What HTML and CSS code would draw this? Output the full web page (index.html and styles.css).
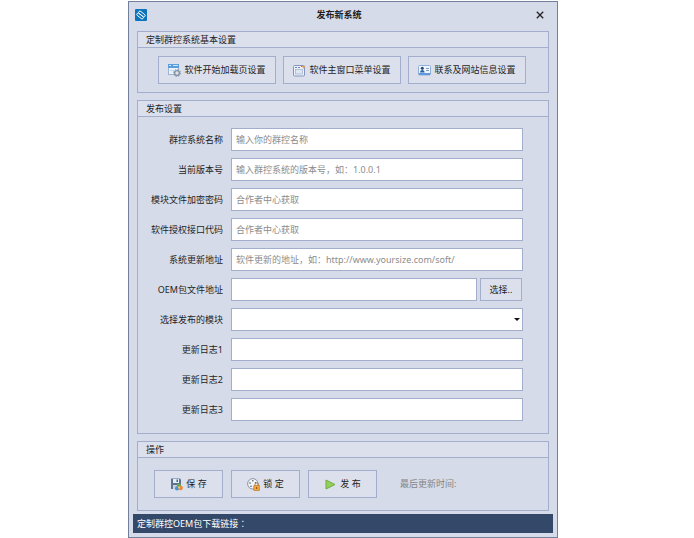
FILE: index.html
```html
<!DOCTYPE html>
<html>
<head>
<meta charset="utf-8">
<title>发布新系统</title>
<link rel="stylesheet" href="styles.css">
</head>
<body>
<main class="window">
  <header class="titlebar">
    <svg class="logo" viewBox="0 0 12 12" aria-hidden="true">
      <rect width="12" height="12" rx="1" fill="#0b74bd"/>
      <g fill="none" stroke="#fff" stroke-width="1" stroke-linejoin="round" stroke-linecap="round">
        <path d="M8 7.6 4 4.4a1.3 1.3 0 0 1 1.8-1.9L9.8 5.7a1.3 1.3 0 0 1-1 2.2"/>
        <path d="M4 4.4 8 7.6a1.3 1.3 0 0 1-1.8 1.9L2.2 6.3a1.3 1.3 0 0 1 1-2.2"/>
      </g>
    </svg>
    <h1 class="title">发布新系统</h1>
    <button class="close" type="button" aria-label="关闭">
      <svg viewBox="0 0 8 8"><path d="M.8.8 7.2 7.2M7.2.8.8 7.2" fill="none" stroke="#222" stroke-width="1.3"/></svg>
    </button>
  </header>

  <section class="group">
    <h2 class="group-head">定制群控系统基本设置</h2>
    <div class="presets">
      <button class="btn" type="button">
        <svg class="icon" viewBox="0 0 13 13">
          <rect x=".5" y=".5" width="10" height="10" fill="#e9f1fb" stroke="#9db4d4"/>
          <path d="M0 0h11v4H0z" fill="#5b9ddb"/>
          <path d="M1 1.5h2M5 1.5h5" stroke="#cfe6fa"/>
          <path d="M2 6.5h4" stroke="#c5d5e8"/>
          <circle cx="9" cy="9" r="2.4" fill="#dfe3ea" stroke="#8592a6" stroke-width="1.4"/>
          <circle cx="9" cy="9" r="3.5" fill="none" stroke="#8592a6" stroke-dasharray="1.4 1.35"/>
        </svg>
        软件开始加载页设置
      </button>
      <button class="btn" type="button">
        <svg class="icon" viewBox="0 0 13 13">
          <rect x=".5" y="1.5" width="11" height="10.5" rx="1" fill="#eef2fb" stroke="#8495bd"/>
          <path d="M2 3.5h2M5 3.5h2" stroke="#6c80ac"/>
          <rect x="2.5" y="5.5" width="7" height="4.5" fill="#dfe6f4" stroke="#a9b6d2" stroke-width=".8"/>
          <path d="M8 2.5h1.5" stroke="#4976bd"/>
          <path d="M10.5 1v3.4M8.8 2.7h3.4" stroke="#ee9a50" stroke-width="1.2"/>
        </svg>
        软件主窗口菜单设置
      </button>
      <button class="btn" type="button">
        <svg class="icon" viewBox="0 0 13 13">
          <rect x=".5" y="1.5" width="12" height="9.5" rx="1" fill="#eef5fd" stroke="#8fafd9"/>
          <path d="M1 9h11v2H1z" fill="#5f9ade"/>
          <circle cx="4.3" cy="4.3" r="1.5" fill="#27476f"/>
          <path d="M2 8.5c0-3.4 4.6-3.4 4.6 0z" fill="#285e9f"/>
          <path d="M8 4.5h3M8 6.5h3" stroke="#7f9cc4"/>
        </svg>
        联系及网站信息设置
      </button>
    </div>
  </section>

  <section class="group">
    <h2 class="group-head">发布设置</h2>
    <form class="form">
      <div class="row"><label for="name">群控系统名称</label><input id="name" type="text" placeholder="输入你的群控名称"></div>
      <div class="row"><label for="version">当前版本号</label><input id="version" type="text" placeholder="输入群控系统的版本号，如：1.0.0.1"></div>
      <div class="row"><label for="password">模块文件加密密码</label><input id="password" type="text" placeholder="合作者中心获取"></div>
      <div class="row"><label for="code">软件授权接口代码</label><input id="code" type="text" placeholder="合作者中心获取"></div>
      <div class="row"><label for="url">系统更新地址</label><input id="url" type="text" placeholder="软件更新的地址，如：http://www.yoursize.com/soft/"></div>
      <div class="row"><label for="oem">OEM包文件地址</label><input id="oem" type="text"><button class="btn browse" type="button">选择..</button></div>
      <div class="row">
        <label for="module">选择发布的模块</label>
        <div class="combo">
          <select id="module"></select>
          <svg class="arrow" viewBox="0 0 6 3"><path d="M0 0h6L3 3z" fill="#111"/></svg>
        </div>
      </div>
      <div class="row"><label for="log1">更新日志1</label><input id="log1" type="text"></div>
      <div class="row"><label for="log2">更新日志2</label><input id="log2" type="text"></div>
      <div class="row"><label for="log3">更新日志3</label><input id="log3" type="text"></div>
    </form>
  </section>

  <section class="group">
    <h2 class="group-head">操作</h2>
    <div class="actions">
      <button class="btn" type="button">
        <svg class="icon" viewBox="0 0 13 13">
          <path d="M1 .5h9l1 1V11H1z" fill="#5c7390"/>
          <path d="M3 1h6v4H3z" fill="#e4ecf5"/>
          <path d="M6.5 1.5h1.5v2.5H6.5z" fill="#4c6583"/>
          <path d="M3 7h5v4H3z" fill="#c6d3e2"/>
          <circle cx="9" cy="7.6" r="2.1" fill="#69a84d"/>
          <circle cx="7" cy="10.4" r="2.1" fill="#4b91d1"/>
          <circle cx="10.7" cy="10" r="2.2" fill="#ee8838"/>
          <circle cx="9" cy="9.4" r="1" fill="#f6d466"/>
        </svg>
        保 存
      </button>
      <button class="btn" type="button">
        <svg class="icon" viewBox="0 0 13 13">
          <circle cx="5.8" cy="5.8" r="5.2" fill="#f2f4f8" stroke="#8a929e"/>
          <g fill="#4f5a68"><circle cx="5.8" cy="2.8" r=".8"/><circle cx="3" cy="5" r=".8"/><circle cx="8.6" cy="4.7" r=".8"/><circle cx="4" cy="8.2" r=".8"/></g>
          <path d="M7.8 8V6.8a1.9 1.9 0 0 1 3.8 0V8" fill="none" stroke="#9a8060"/>
          <rect x="6.7" y="7.5" width="6" height="5" rx=".6" fill="#f0a53d" stroke="#c07a30" stroke-width=".7"/>
          <path d="M9.7 9v2" stroke="#8a4c15"/>
        </svg>
        锁 定
      </button>
      <button class="btn" type="button">
        <svg class="icon" viewBox="0 0 13 13">
          <path d="M2 2v9L11 6.5z" fill="#94cf59" stroke="#6fac41" stroke-linejoin="round"/>
        </svg>
        发 布
      </button>
      <span class="updated">最后更新时间:</span>
    </div>
  </section>

  <footer class="status">定制群控OEM包下载链接：</footer>
</main>
</body>
</html>
```
FILE: styles.css
```css
* { box-sizing: border-box; }

body {
  margin: 0;
  padding: 1px 136px 0 128px;
  background: #fff;
  color: #1e1e1e;
  font: 9px/14px "Noto Sans", "Noto Sans CJK SC", sans-serif;
}

button, input, select { font: inherit; color: inherit; }

.window {
  display: flex;
  flex-direction: column;
  padding: 0 8px 4px;
  border: 1px solid #72809c;
  background: #d6dbe9;
}

.titlebar {
  display: grid;
  grid-template-columns: 16px 1fr 26px;
  align-items: center;
  height: 29px;
  margin: 0 -4px 0 -2px;
  padding-bottom: 4px;
}

.logo { width: 12px; height: 12px; }

.title {
  margin: 0;
  font-size: 9px;
  font-weight: 700;
  text-align: center;
}

.close {
  display: flex;
  justify-content: center;
  padding: 0;
  border: 0;
  background: none;
}

.close svg { width: 8px; height: 8px; }

.group {
  margin-bottom: 7px;
  border: 1px solid #a3aecd;
}

.group-head {
  margin: 0;
  padding: 0 8px;
  border-bottom: 1px solid #a3aecd;
  background: #dce0ec;
  font-size: 9px;
  font-weight: 400;
  line-height: 15px;
}

.btn {
  display: flex;
  align-items: center;
  justify-content: center;
  gap: 3px;
  height: 28px;
  padding: 0;
  border: 1px solid #a3aecd;
  background: #dce0ec;
  white-space: nowrap;
}

.icon { width: 13px; height: 13px; }

.presets {
  display: grid;
  grid-template-columns: repeat(3, 1fr);
  gap: 7px;
  padding: 8px 22px 8px 20px;
}

.form {
  display: flex;
  flex-direction: column;
  gap: 7px;
  padding: 11px 25px 12px 8px;
}

.row {
  display: flex;
  align-items: center;
}

.row label {
  flex: 0 0 85px;
  padding-right: 8px;
  text-align: right;
  white-space: nowrap;
}

.row input, .combo { flex: 1; min-width: 0; }

.row input, .combo select {
  height: 23px;
  padding: 0 4px;
  border: 1px solid #a3aecd;
  border-radius: 0;
  outline: 0;
  background: #fff;
}

.row input::placeholder { color: #8c8c8c; opacity: 1; }

.row .browse {
  width: 42px;
  height: 23px;
  margin: 0 1px 0 3px;
}

.combo { position: relative; display: flex; }
.combo select { width: 100%; appearance: none; }

.arrow {
  position: absolute;
  top: 10px;
  right: 3px;
  width: 6px;
  height: 3px;
  pointer-events: none;
}

.actions {
  display: flex;
  align-items: center;
  gap: 8px;
  padding: 12px 16px;
}

.actions .btn { width: 69px; }

.updated { margin-left: 15px; color: #858585; }

.status {
  margin: -4px -4px 0;
  padding: 0 4px;
  background: #34496a;
  color: #fff;
  font-family: "Noto Sans", "Noto Sans CJK TC", sans-serif;
  line-height: 19px;
}
```
